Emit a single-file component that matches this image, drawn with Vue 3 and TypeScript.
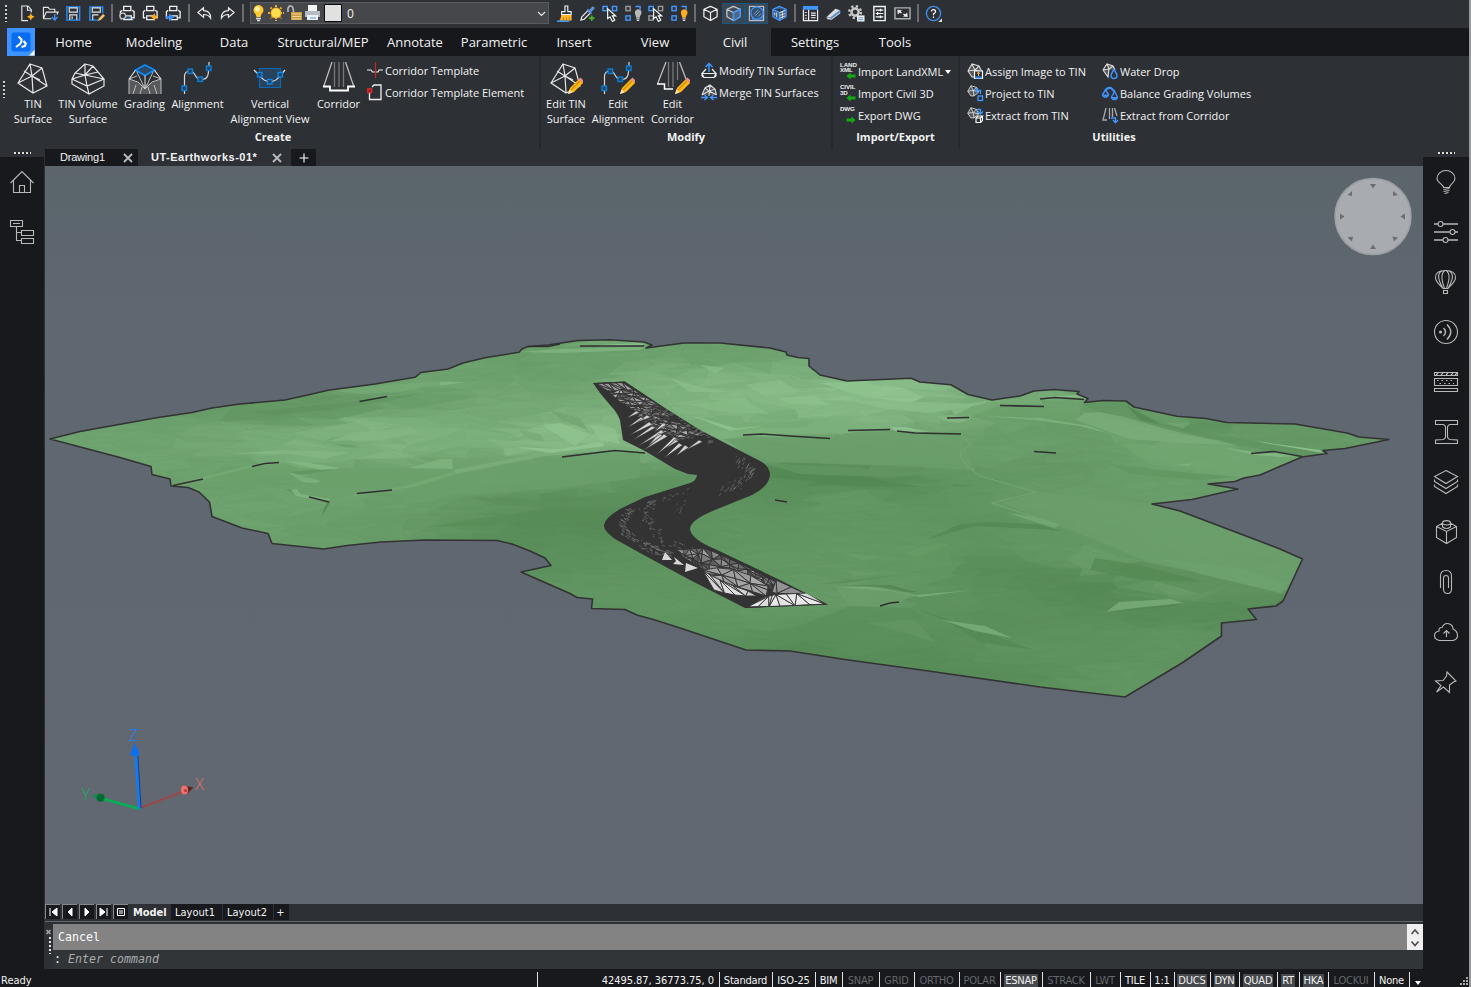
<script setup lang="ts">
type Pt = [number, number]
interface Facet { d: string; fill: string }

/* ---------- icons ---------- */
const W = 'fill="none" stroke="#e6e6e6" stroke-width="1.2"'
const B = 'fill="none" stroke="#3f96ff" stroke-width="1.4"'
const tin = '<path d="M14 2 26 6 31 24 17 31 2 21ZM2 21 16 14 14 2M26 6 16 14 31 24M16 14 17 31M16 14 8 9M16 14 24 18"/>'
const pencil = '<path d="M19 32 21 26 30 17 34 21 25 30Z" fill="#ffb819"/><path d="M22 28 31 19" stroke="#d98b00" stroke-width="1.3"/><path d="M29.500 17.500 31.500 15.500 35 19 33.500 21Z" fill="#ef8f86"/><path d="M19 32 20.500 27.500 23.500 30.500Z" fill="#f6e3bd"/>'
const nodes = (c: string) => `<g fill="#24435f" stroke="${c}" stroke-width="1.4"><rect x="1" y="24" width="4.500" height="4.500"/><rect x="7" y="7" width="4.500" height="4.500"/><rect x="17" y="15" width="4.500" height="4.500"/><rect x="25.500" y="4" width="4.500" height="4.500"/></g>`
const curve = '<path d="M3.500 32V14Q4 9 9 9C15 9 13 17 19.500 17.500 27 18 28 14 28-1" fill="none" stroke="#d8d8d8" stroke-width="1.2"/>'
const miniTin = '<path d="M1 8 5 1 12 3 15 9 9 14 5 14ZM5 1 8 7 12 3M1 8 8 7 9 14M8 7 15 9" fill="#55585c" stroke="#dcdcdc" stroke-width="1.1"/>'
const print = '<path d="M5 1.500H12.500V6H5ZM3.500 13.500H1.500V7L3.500 5.500M14 5.500 16 7V13.500H14M5 11.500H13V15.500H5Z" fill="none" stroke="#f1f1f1" stroke-width="1.4"/>'
const cube = (a: string, b: string) => `<path d="M9 1.500 16 4.500V12.500L9 16.500 2 12.500V4.500ZM2 4.500 9 8 16 4.500M9 8V16.500" fill="${a}" stroke="${b}" stroke-width="1.3" stroke-linejoin="round"/>`
const squares = (a: string, b: string) => `<g fill="none" stroke-width="1.500"><rect x="1" y="1.500" width="4.500" height="4.500" stroke="${a}"/><rect x="11" y="1.500" width="4.500" height="4.500" stroke="${b}"/><rect x="1" y="11.500" width="4.500" height="4.500" stroke="${b}"/></g>`
const pointer = '<path d="M6 4V14.500L8.500 12.500 11 17.500 13.500 16 11 11.500H14.500Z" fill="#2d3035" stroke="#fff" stroke-width="1.2"/>'
const bulb = (c: string) => `<path d="M10.500 8.500A3.500 3.500 0 1 1 16.500 10.500L15.500 13.500H12L11 10.500Z" fill="${c}"/><path d="M12 14.500H15.500M12.500 16.300H15" stroke="#ddd" stroke-width="1.2"/>`

const ic: Record<string, string> = {
  newf: `<path d="M13 8V5L9.500 1H3V16.500H9.500M9 1V5.500H13" ${W}/><path d="M12.500 8.500 13.700 11 16.500 12.500 13.700 14 12.500 16.500 11.300 14 8.500 12.500 11.300 11Z" fill="#ffb11e"/>`,
  open: `<path d="M1.500 14.500V2.500H6.500L8 4.500H13.500V7.500M1.500 14.500 4.500 7.500H17L15.800 10M1.500 14.500H10" ${W}/><path d="M13.500 9.500V15M10.500 12.500 13.500 16 16.500 12.500" ${B}/>`,
  save: `<path d="M2 2H15.500V16H2Z" fill="none" stroke="#2190ff" stroke-width="1.500"/><path d="M4.500 3H13V7.500H4.500ZM5 16V10.500H12.500V16M7.500 12V15" ${W}/>`,
  saveas: `<path d="M11 16H2V2H15.500V9" fill="none" stroke="#2190ff" stroke-width="1.500"/><path d="M4.500 3H13V7.500H4.500ZM5 16V10.500H11" ${W}/><path d="M10.500 17 11.500 14 16 9.500 18 11.500 13.500 16Z" fill="#f5c36b"/>`,
  preview: print + '<circle cx="4" cy="11.500" r="3" fill="#2d3035" stroke="#ccc" stroke-width="1.300"/><path d="M2 16 3 14" stroke="#ccc"/><path d="M12 14 15 16" stroke="#fff"/><path d="M7 14H13" stroke="#3f96ff"/>',
  publish: print + '<path d="M13 8.500 14.200 11 17 12.500 14.200 14 13 17 11.500 14 9 12.500 11.500 11Z" fill="#ffa913"/>',
  plot: print + '<path d="M1 13H7M4.500 10 8 13 4.500 16" fill="none" stroke="#2f8cff" stroke-width="2"/>',
  undo: '<path d="M2 8 8 3V6C13 6 15.500 8.500 15.500 14 13.500 10.500 11.500 10 8 10V13Z" fill="none" stroke="#ececec" stroke-width="1.200"/>',
  redo: '<path d="M16 8 10 3V6C5 6 2.500 8.500 2.500 14 4.500 10.500 6.500 10 10 10V13Z" fill="none" stroke="#ececec" stroke-width="1.200"/>',
  brush: '<path d="M9.500 1H12.500V7H16V10H6V7H9.500Z" fill="none" stroke="#f5f5f5" stroke-width="1.200"/><path d="M5.500 10.500H16.500V16.500H3.500Q5.500 14 5.500 10.500" fill="#ffb52b"/><path d="M8 13V16M11 13V16M14 13V16" stroke="#c47b00"/><path d="M1 17.200H14" stroke="#4aa0ff" stroke-width="1.500"/>',
  dropper: '<path d="M2 16 3 12.500 9.500 6 12 8.500 5.500 15Z" fill="none" stroke="#e6e6e6" stroke-width="1.300"/><path d="M8 5.500 9.500 4 11 5 14 1.500Q17 1.500 16.500 4L13 7.500 13.700 9 12.500 10Z" fill="#5b8fd9"/><path d="M13.500 11V17M10.500 14H16.500" stroke="#49b51e" stroke-width="1.800"/>',
  selA: squares('#4297ff', '#4297ff').replace(/<rect x="1" y="11.*?\/>/, '') + pointer,
  selB: squares('#999', '#4297ff').replace(/<rect x="11".*?\/>/, '') + bulb('#b8b8b8') + '<path d="M11 1.500H16V5" fill="none" stroke="#4297ff" stroke-width="1.500"/>',
  selC: squares('#4297ff', '#999') + pointer,
  selD: squares('#4297ff', '#4297ff').replace(/<rect x="11".*?\/>/, '') + bulb('#ffab24') + '<path d="M11 1.500H16V5" fill="none" stroke="#4297ff" stroke-width="1.500"/>',
  cube: cube('none', '#f0f0f0'),
  cubeB: cube('#4c545c', '#c5c9cd') + '<path d="M9 8 16 4.500V12.500L9 16.500Z" fill="#4d6684" stroke="#4297ff" stroke-width="1.500"/>',
  sphere: '<rect x="1.500" y="1.500" width="15" height="15" fill="none" stroke="#b6bcc2" stroke-width="1.300"/><rect x="4.500" y="4.500" width="10.500" height="10.500" fill="none" stroke="#3f96ff"/><circle cx="9.500" cy="8.500" r="6.500" fill="#33506f" stroke="#3f96ff" stroke-width="1.300"/><path d="M6 10 11 5M7 12 13 6M10 12.500 14 9" stroke="#7f9fc2"/>',
  wall: cube('#3c5f87', '#4297ff') + '<path d="M4 8V11M6 8V13M9 8 15 6M9 11 15 9M9 14 15 11.500M12 7V14" stroke="#e4dcc9"/>',
  panel: '<path d="M1 1H17V5H1Z" fill="#3f96ff"/><path d="M1.500 5V16.500H16.500V5M7 5V16.500M9.500 8.500H14.500M9.500 11H14.500M9.500 13.500H14.500" fill="none" stroke="#eee" stroke-width="1.300"/><path d="M3 8H5M3 11H5M3 14H5" stroke="#eee"/>',
  eraser: '<path d="M1.500 13 11 4 16 5.500 16 9 7 15.500 2.500 15Z" fill="#ddd"/><path d="M6 14 16 6.500" stroke="#3f96ff" stroke-width="2.200"/><path d="M2 13 7 14 16 6" fill="none" stroke="#8b8b8b"/>',
  gear: '<circle cx="7.500" cy="7.500" r="3.800" fill="none" stroke="#c8c8c8" stroke-width="2.600"/><circle cx="7.500" cy="7.500" r="6.200" fill="none" stroke="#c8c8c8" stroke-width="2.600" stroke-dasharray="2.400 2.470"/><path d="M9.500 11H17.500V17.500H9.500Z" fill="#eee"/><path d="M11 13.500H16M11 15.500H16" stroke="#5c96d8"/>',
  sheet: '<path d="M3 1.500H15V16.500H3Z" fill="none" stroke="#f4f4f4" stroke-width="1.500"/><path d="M5 5.500H13M5 9H13M5 12.500H13M10 4V7M7 7.500V10.500M10 11V14" stroke="#fff" stroke-width="1.300"/>',
  screen: '<path d="M1 3H17V14.500H1Z" fill="none" stroke="#aeb1b4" stroke-width="1.500"/><path d="M3.500 5 8.500 5.500 4 10ZM14.500 12.800 9.500 12.300 14 8Z" fill="#e7e7e7"/><path d="M5 6.500 8 8.500M13 11.500 10 9.500" stroke="#eee" stroke-width="1.500"/>',
  help: '<circle cx="9" cy="9" r="7.500" fill="none" stroke="#3f8ff0" stroke-width="1.400"/><path d="M6.800 7Q6.800 4.800 9 4.800 11.200 4.800 11.200 6.800 11.200 8 9 9.400V10.800M9 12.300V13.800" fill="none" stroke="#fff" stroke-width="1.300"/><path d="M18 14V18H14Z" fill="#ddd"/>',

  tin: `<g ${W}>${tin}</g>`,
  vol: `<g ${W}><path d="M14 2 22 4 33 17 16 24 1 17 4 11ZM1 17V22L18 32 33 24V17M16 24 18 32M1 17 14 13 14 2M14 13 16 24M14 13 27 10M14 13 33 17M4 11 14 13 22 4"/></g>`,
  grading: '<path d="M1 17V32H33V17L17 23Z" fill="#57595b"/><path d="M1 32V17L8 8 17 27 26 8 33 17V32M1 17 9 14M33 17 25 14M1 17 10 20M33 17 24 20M10 20 17 27 24 20M5 32 8 23M29 32 26 23M12 32 14 25M22 32 20 25" fill="none" stroke="#bcbcbc"/><path d="M17 3 26.500 8 17 13.500 7.500 8Z" fill="#2f4963" stroke="#0a8bff" stroke-width="1.700"/><path d="M7.500 8 1 17M26.500 8 33 17M17 13.500V27" stroke="#ddd"/>',
  align: curve + nodes('#0b7fd8'),
  valign: '<path d="M6.500 6.500H27.500V25.500H6.500Z" fill="#29435c" stroke="#0b68b4" stroke-width="1.200"/><path d="M1 8C5 12 6 13 8 15 12 21 22 21 26 15L32 8" fill="none" stroke="#ddd" stroke-width="1.300"/><g fill="#24435f" stroke="#0b87f0" stroke-width="1.300"><rect x="4.500" y="10.500" width="4.500" height="4.500"/><rect x="14.500" y="17.500" width="4.500" height="4.500"/><rect x="25" y="10.500" width="4.500" height="4.500"/></g>',
  corr: '<path d="M12.500 0V25M21.500 0V25M17 0V25" stroke="#777" stroke-width="1.300"/><path d="M10 0 1.500 25M23.500 0 32 25" stroke="#bbb" stroke-width="1.300"/><path d="M1 24.500H8V28.500H26V24.500H33" fill="none" stroke="#fff" stroke-width="1.800"/>',
  etin: `<g ${W}>${tin}</g>${pencil}`,
  ealign: curve + nodes('#0b7fd8') + pencil,
  ecorr: '<path d="M12.500 0V25M21.500 0V18M17 0V25" stroke="#777" stroke-width="1.300"/><path d="M10 0 1.500 22M23.500 0 30 17" stroke="#bbb" stroke-width="1.300"/><path d="M1 22H8.500V27H17" fill="none" stroke="#fff" stroke-width="1.500"/>' + pencil,

  ctpl: '<path d="M0 8H4L5.500 10H11L12 8H16" fill="none" stroke="#eee" stroke-width="1.200"/><path d="M8.500 0V16" stroke="#c92727" stroke-width="1.300"/>',
  ctel: '<path d="M5 3 7 1H14V15.500H2.500V9" fill="none" stroke="#eee" stroke-width="1.300"/><rect x=".8" y="4.800" width="3.800" height="3.800" fill="#8b2222" stroke="#e22c2c" stroke-width="1.300"/>',
  mtin: '<path d="M1 11.500 5 7M15 11.500 11 7M1 11.500H15L13 15.500H3ZM1 11.500V14L3 15.500M15 11.500V14L13 15.500" fill="none" stroke="#ececec" stroke-width="1.200"/><path d="M8 10V2M4.500 5 8 1.500 11.500 5" fill="none" stroke="#3f96ff" stroke-width="1.500"/>',
  merge: '<path d="M1 11 4 4 9 1 14 5 15.500 11M4 4 8 7 14 5M9 1 8 12M1 11 8 7 15.500 11" fill="#505357" stroke="#dcdcdc" stroke-width="1.100"/><path d="M0 13.500H6M3.500 11 6.500 13.500 3.500 16M16 13.500H10M12.500 11 9.500 13.500 12.500 16" fill="none" stroke="#3f96ff" stroke-width="1.400"/>',
  land: '<text x="0" y="4">LAND</text><text x="0" y="9">XML</text><path d="M6.500 13 10.500 9.500V11.500H15.500V14.500H10.500V16.500Z" fill="#12ac12"/>',
  civil: '<text x="0" y="4">CIVIL</text><text x="0" y="10">3D</text><path d="M6.500 13 10.500 9.500V11.500H15.500V14.500H10.500V16.500Z" fill="#12ac12"/>',
  dwg: '<text x="0" y="4">DWG</text><path d="M15.500 13 11.500 9.500V11.500H6.500V14.500H11.500V16.500Z" fill="#12ac12"/>',
  assign: miniTin + '<path d="M7.500 8H15.500V15.500H7.500Z" fill="#2d3035" stroke="#fff" stroke-width="1.200"/><path d="M8 13.500H15V15.500H8Z" fill="#2f86f0"/><path d="M11.500 9.500V13M10 10.500 11.500 9.300 13 10.500" stroke="#f1b04a"/>',
  project: '<g transform="scale(.78)">' + miniTin + '</g><path d="M9 5.500H13.500V9M11 3 8.500 5.500 11 8" fill="none" stroke="#3f96ff" stroke-width="1.300"/><rect x="11" y="11" width="4.500" height="4.500" fill="#2d3035" stroke="#3f96ff" stroke-width="1.300"/>',
  extract: '<g transform="scale(.78)">' + miniTin + '</g><path d="M10 2.500H13.500V6M11 4.500 13.500 7 16 4.500" fill="none" stroke="#3f96ff" stroke-width="1.300"/><path d="M9 11H13.500V15.500H9ZM9 11 11 9H15.500L13.500 11M15.500 9V13.500L13.500 15.500" fill="#2d3035" stroke="#fff" stroke-width="1.100"/>',
  drop: '<path d="M1 7 5 1 11 3 13 7M1 7 7 6 5 1M7 6 11 3M1 7 6 14 7 6" fill="#55585c" stroke="#dcdcdc" stroke-width="1.200"/><path d="M12 6.500Q15 11 15 12.800 15 15.500 12 15.500 9 15.500 9 12.800 9 11 12 6.500Z" fill="#2d3035" stroke="#3f96ff" stroke-width="1.400"/>',
  balance: '<path d="M3 6Q5 2 9 3L13 7" fill="none" stroke="#3f8ff5" stroke-width="2.200"/><path d="M3.500 5 6.500 9.500Q6 12 3.500 12 1 12 .5 9.500ZM12.500 6.500 15.500 12Q15 14.500 12.500 14.500 10 14.500 9.500 12Z" fill="none" stroke="#3f8ff5" stroke-width="1.500"/><path d="M.8 9.500H6.200V11.500H.8ZM9.800 12H15.200V14H9.800Z" fill="#3f8ff5"/>',
  ecor: '<path d="M4 1 1 13H5M7.500 1V12M10.500 1V10M12.500 1 15 9" fill="none" stroke="#a7a9ab" stroke-width="1.300"/><path d="M9 11H13.500V15M11 13 13.500 15.800 16 13" fill="none" stroke="#3f96ff" stroke-width="1.300"/>',

  home: '<path d="M.5 13 12 1.500 23.500 13M3.500 10.500V22.500H20.500V10.500M9.500 22.500V15.500H14.500V22.500"/>',
  tree: '<path d="M.5.500H12.500V6.500H.5ZM3 3.500H10M6.500 6.500V20.500H11.500M6.500 12.500H11.500M11.500 10.500H23.500V15.500H11.500ZM11.500 18.500H23.500V23.500H11.500Z"/>',
  tip: '<path d="M9.500 17.500C9.500 14 3 13 3 8.500A9 8 0 0 1 21 8.500C21 13 15.500 14 15.500 17.500ZM9.500 19.500 15.500 18.500M9.500 21.500 15.500 20.500M10.500 23.500 14.500 22.500"/>',
  sliders: '<path d="M0 4H4M9 4H24M0 12H16M21 12H24M0 20H9M14 20H24" stroke-width="1.500"/><circle cx="6.500" cy="4" r="2.500"/><circle cx="18.500" cy="12" r="2.500"/><circle cx="11.500" cy="20" r="2.500"/>',
  balloon: '<path d="M9 18.500C6 15 1.500 12 1.500 7.500Q1.500.500 11.500.500 21.500.500 21.500 7.500C21.500 12 17 15 14 18.500ZM9 18.500C5 11 2 4 8 .800M14 18.500C18 11 21 4 15 .800M10.500 18.500C8 11 6 4 11 .5M12.500 18.500C15 11 17 4 12 .5M9.500 20.500H13.500V23.500H9.500Z"/>',
  cast: '<circle cx="12" cy="12" r="11.500"/><circle cx="6.500" cy="12" r="1" fill="#c8c8c8"/><path d="M9.500 8Q13.500 12 9.500 16M13 4.500Q20.500 12 13 19.500" stroke-width="1.400"/>',
  hatch: '<path d="M.5 2.500H23.500V5.500H.5ZM.5 8.500H23.500V15.500H.5ZM.5 18.500H23.500V21.500H.5ZM2 5 4 3M7 5 9 3M12 5 14 3M17 5 19 3M21 5 23 3"/><path d="M3 10.500H21M5.500 13.500H20" stroke-dasharray="1.500 3"/>',
  beam: '<path d="M1.500.500H23.500V4.500L16 4.500Q13.500 5 13.500 7.500V16.500Q13.500 19 16 19.500L23.500 20V23.500H1.500V20L9 19.500Q11.500 19 11.500 16.500V7.500Q11.500 5 9 4.500L1.500 4.500Z"/>',
  layers: '<path d="M12 .5 23.500 6.500 12 13.500.5 6.500ZM.5 9.500 .5 11.500 12 18.500 23.500 11.500V9.500M.5 14.500V16.500L12 23.500 23.500 16.500V14.500"/>',
  block: '<path d="M9 3 2.500 6.500V17.500L12.500 23.500 22.500 17.500V6.500L16 3M2.500 6.500 12.500 11.500 22.500 6.500M12.500 11.500V23.500M8.500 2.500V7Q12.500 10 16.500 7V2.500"/><ellipse cx="12.500" cy="2.800" rx="4" ry="2.200"/>',
  clip: '<path d="M6.500 18V6Q6.500.500 12 .5 17.500.500 17.500 6V19Q17.500 23.500 13.500 23.500 9.500 23.500 9.500 19V8Q9.500 5.500 12 5.500 14.500 5.500 14.500 8V18"/>',
  cloud: '<path d="M5.500 20.500Q.500 19.500.500 15.500.500 12 5 11 4.500 7.500 8 7.500 10 3 14 3.500 19 4.500 19 9 23.500 11 23.500 15.500 23.500 19.500 19 20.500ZM12.500 17V10.500M9.500 13.500 12.500 10.500 15.500 13.500"/>',
  pin: '<path d="M13 2 22 11 19.500 12 15.500 15V22.500L9.500 17 2.500 22 7 15.500 1.500 11 9 10.500 12.500 6Z"/>',
}

const bar1 = [['newf', 'open', 'save', 'saveas'], ['preview', 'publish', 'plot'], ['undo', 'redo']]
const bar2 = [['brush', 'dropper', 'selA', 'selB', 'selC', 'selD'], ['cube', 'cubeB', 'sphere', 'wall'], ['panel', 'eraser', 'gear', 'sheet', 'screen'], ['help']]

const tabs = [
  ['Home', 'w77'], ['Modeling', 'w84'], ['Data', 'w76'], ['Structural/MEP', 'w102'], ['Annotate', 'w82'], ['Parametric', 'w76'],
  ['Insert', 'w84'], ['View', 'w80'], ['Civil', 'w75 on'], ['Settings', 'w88'], ['Tools', 'w72'],
]
const groups = [
  { title: 'Create', cls: 'create', big: [['tin', 'TIN', 'Surface', 'c52'], ['vol', 'TIN Volume', 'Surface', 'c58'], ['grading', 'Grading', '', 'c55'], ['align', 'Alignment', '', 'c51'], ['valign', 'Vertical', 'Alignment View', 'c94'], ['corr', 'Corridor', '', 'c43']],
    cols: [{ cls: 'two', rows: [['ctpl', 'Corridor Template'], ['ctel', 'Corridor Template Element']] }] },
  { title: 'Modify', cls: 'modify', big: [['etin', 'Edit TIN', 'Surface', 'c50'], ['ealign', 'Edit', 'Alignment', 'c54'], ['ecorr', 'Edit', 'Corridor', 'c55']],
    cols: [{ cls: 'two near', rows: [['mtin', 'Modify TIN Surface'], ['merge', 'Merge TIN Surfaces']] }] },
  { title: 'Import/Export', cls: 'impexp', big: [], cols: [{ cls: '', rows: [['land', 'Import LandXML'], ['civil', 'Import Civil 3D'], ['dwg', 'Export DWG']] }] },
  { title: 'Utilities', cls: 'util', big: [], cols: [
    { cls: 'ua', rows: [['assign', 'Assign Image to TIN'], ['project', 'Project to TIN'], ['extract', 'Extract from TIN']] },
    { cls: '', rows: [['drop', 'Water Drop'], ['balance', 'Balance Grading Volumes'], ['ecor', 'Extract from Corridor']] }] },
]
const rail = ['tip', 'sliders', 'balloon', 'cast', 'hatch', 'beam', 'layers', 'block', 'clip', 'cloud', 'pin']
const status: [string, number, string][] = [
  ['Standard', 53, ''], ['ISO-25', 43, ''], ['BIM', 27, ''], ['SNAP', 37, 'dim'], ['GRID', 35, 'dim'], ['ORTHO', 45, 'dim'], ['POLAR', 41, 'dim'],
  ['ESNAP', 42, 'hot'], ['STRACK', 48, 'dim'], ['LWT', 30, 'dim'], ['TILE', 30, ''], ['1:1', 24, ''], ['DUCS', 36, 'hot'], ['DYN', 29, 'hot'],
  ['QUAD', 38, 'hot'], ['RT', 22, 'hot'], ['HKA', 29, 'hot'], ['LOCKUI', 46, 'dim'], ['None', 35, ''],
]

/* ---------- terrain ---------- */
let seed = 7
const rnd = () => { seed = (seed * 16807) % 2147483647; return seed / 2147483647 }

const outline = 'M50 439 80 431.500 155 418 192 412.500 212 408 240 404 285 400 310 394.500 328 390.300 375 384 415 377.300 421 372.500 448 369 463 363 485 357.700 519 352.300 522 349 528 346.500 548 345 578 340.500 610 339.700 644 342 652 345 646 348 684 343 720 343 770 348 786 352 787 355 798 357.500 809 358.500 809 366 820 375 847 381 911 378.300 920 382 951 384.700 968 394.500 992 400 1020 396 1034 391 1054 389.500 1079 391.500 1077 394 1088 398.500 1084.500 402.500 1103 400.500 1126 401 1134 407 1177 416.300 1206 418.500 1227 422.500 1295 424 1347 433 1359 437 1389 439.500 1345 448.500 1323 450.500 1327 453.500 1302 457 1260 475 1244 478 1235 481.500 1208 484 1238 489 1192 499.500 1152 504 1180 511 1280 549 1302.500 559 1283 601 1276 606 1248 609 1256.500 619.500 1221.500 623 1221.500 636 1182 663 1125 697 1040 687 925 670.500 845 659.500 790 651 746 650 680 628 655 620 637 615 625 609.500 591.500 608.500 592.500 599 577 597.500 570 593.500 521 572 551 565.500 545 558 530 551 512 544 497 540.500 425 540 381 542 347 545.500 324 549 272 543.500 268 533.500 242 528 212 516.500 209.500 502 199 492 188 487.500 171 486 170 479 152 474.500 151 466.500 120 457.500Z'

const lights = [
  60,439,.4,150,410,.35,150,430,.38,200,410,.32,250,400,.36,300,412,.28,260,412,.22,330,404,.22,350,395,.35,420,383,.4,430,400,.33,480,370,.38,520,358,.33,600,360,.34,620,355,.36,700,355,.36,750,355,.38,800,370,.5,560,372,.36,
  180,440,.43,240,435,.5,300,440,.58,360,430,.62,420,430,.6,460,420,.54,500,400,.46,560,385,.42,590,420,.62,570,430,.72,540,442,.68,600,440,.7,480,440,.55,520,410,.48,650,375,.56,700,385,.62,750,380,.62,800,385,.68,850,390,.78,900,395,.8,820,405,.7,760,410,.6,720,400,.66,870,415,.66,940,405,.6,700,430,.58,780,425,.54,390,450,.6,300,452,.56,160,450,.4,
  200,475,.38,250,480,.36,300,500,.38,260,520,.38,320,535,.34,400,510,.34,450,480,.36,400,473,.38,350,475,.38,550,470,.33,600,475,.28,500,510,.22,560,505,.12,450,525,.22,520,520,.1,600,520,.08,500,540,.12,560,560,.16,600,590,.22,640,600,.23,580,600,.22,700,630,.2,760,620,.24,480,465,.4,640,490,.18,220,500,.38,380,530,.32,
  780,450,.34,850,450,.34,900,455,.33,800,470,.1,850,478,.05,900,482,.12,780,490,.15,850,500,.25,950,480,.22,980,450,.33,1050,430,.32,1100,440,.3,1050,470,.26,1100,500,.32,1150,520,.36,1200,540,.36,1250,570,.35,1100,560,.32,1180,585,.3,1230,585,.34,1050,545,.24,980,530,.2,900,540,.24,850,550,.24,800,530,.22,1150,430,.45,1020,415,.36,1100,410,.32,1180,440,.46,1220,460,.46,1200,425,.15,1130,405,.25,1250,425,.28,1300,430,.28,1380,438,.3,1300,443,.25,1200,417,.28,1180,480,.34,1000,440,.34,1050,400,.5,960,410,.45,
  1000,570,.12,1050,580,.09,1100,592,.06,1150,612,.1,1220,608,.1,1260,605,.08,1000,620,.14,950,600,.18,900,570,.24,870,590,.28,860,640,.15,900,660,.1,960,670,.12,800,645,.08,1020,650,.18,1120,680,.22,1170,640,.21,1100,640,.18,1000,680,.12,830,600,.28,760,640,.14,
]
const lightAt = (x: number, y: number) => {
  let s = 0, w = 0
  for (let i = 0; i < lights.length; i += 3) {
    const dx = (x - lights[i]) / 3, dy = y - lights[i + 1]
    const k = 1 / ((dx * dx + dy * dy + 40) ** 1.9)
    s += k * lights[i + 2]; w += k
  }
  return s / w
}
const green = (l: number) => `rgb(${Math.round(80 + 75 * l)},${Math.round(133 + 74 * l)},${Math.round(81 + 74 * l)})`

const facets: Facet[] = (() => {
  const cw = 34, ch = 7, nx = 42, ny = 53
  const p: Pt[][] = []
  for (let j = 0; j <= ny; j++) {
    p.push([])
    for (let i = 0; i <= nx; i++) p[j].push([20 + i * cw + (rnd() - .5) * 32 + (j % 2) * 14, 332 + j * ch + (rnd() - .5) * 6 + Math.sin(i / 4) * 3])
  }
  const bins: string[] = []
  const add = (a: Pt, b: Pt, c: Pt) => {
    const x = (a[0] + b[0] + c[0]) / 3, y = (a[1] + b[1] + c[1]) / 3
    const base = lightAt(x, y)
    const l = base + (rnd() - .5) * (.015 + base * base * .24)
    const q = Math.max(0, Math.min(80, Math.round(l * 80)))
    bins[q] = (bins[q] || '') + `M${[a, b, c].map(v => v[0].toFixed(1) + ' ' + v[1].toFixed(1)).join(' ')}Z`
  }
  for (let j = 0; j < ny; j++) for (let i = 0; i < nx; i++) {
    const a = p[j][i], b = p[j][i + 1], c = p[j + 1][i], d = p[j + 1][i + 1]
    if (rnd() > .5) { add(a, b, c); add(b, d, c) } else { add(a, b, d); add(a, d, c) }
  }
  return bins.map((d, q) => ({ d, fill: green(q / 80) })).filter(f => f.d)
})()

const patches: [string, number][] = [
  ['M330 390 400 384 445 381 465 382 430 386 400 392 360 394Z', .5],
  ['M440 382 465 382 440 386Z', .66], ['M250 412 300 407 340 404 330 410 270 415Z', .18], ['M340 403 385 397 420 394 385 402 335 408Z', .22],
  ['M519 352 560 349 646 347 640 350 560 353Z', .66], ['M560 346 650 344 640 342 590 341Z', .48], ['M598 345 640 343 645 345 600 347Z', .85],
  ['M456 474 500 465 545 456 600 451 640 452 640 478 560 488 470 495 405 490Z', .35],
  ['M470 497 560 502 650 494 625 508 560 508 500 505Z', .14], ['M430 527 480 518 590 510 605 522 520 522 470 526Z', .1],
  ['M743 436 830 439 850 432 895 431 961 435 966 452 975 470 900 466 770 462 740 448Z', .34],
  ['M766 463 860 468 940 474 890 477 800 474Z', .22],
  ['M172 485 210 475 255 464 285 461 325 465 340 470 320 468 275 465 205 479Z', .52],
  ['M205 479 255 466 285 463 300 468 288 472 240 480Z', .36],
  ['M285 461 310 463 340 468 325 471 300 465Z', .7],
  ['M288 472 310 475 322 482 314 483 302 482Z', .6], ['M288 472 300 475 340 469 310 470Z', .2],
  ['M293 490 325 480 360 475 450 474 440 481 405 487 360 492 330 502 309 497 297 496Z', .37],
  ['M340 469 395 468 408 470 452 470 450 475 380 483 325 482 300 476Z', .36],
  ['M285 489 299 496 296 492 293 490Z', .14], ['M291 490 297 489 300 494 330 499 327 502 296 496Z', .66],
  ['M331 501 322 516 324 508 328 502Z', .02], ['M330 501 360 494 405 486 452 472 456 474 415 487 370 493Z', .5],
  ['M410 468 440 459 452 459 453 469Z', .64], ['M453 470 500 461 545 452 600 448 622 449 600 451 545 456 500 465 456 474Z', .56],
  ['M330 438 345 436 361 447 322 443Z', .46], ['M335 444 350 445 361 448 345 447Z', .28],
  ['M330 441 355 432 410 428 420 433 380 440Z', .68], ['M230 454 280 450 350 452 325 459 290 454Z', .68],
  ['M542 425 560 423 590 434 575 446Z', .84], ['M515 447 560 449 600 442 605 446 550 453Z', .86], ['M550 410 580 418 588 430 562 420Z', .42],
  ['M590 425 615 428 620 444 600 440Z', .82], ['M520 430 540 434 545 442 525 438Z', .5],
  ['M623 398 640 395 655 415 640 405Z', .62], ['M670 378 700 387 730 392 690 392Z', .76], ['M700 365 725 368 715 373Z', .72], ['M690 405 740 398 770 414 720 412Z', .72],
  ['M745 385 780 380 800 392 765 396Z', .76], ['M775 398 815 396 830 405 790 404Z', .8], ['M655 372 690 370 675 378Z', .46],
  ['M690 415 735 428 765 426 730 431Z', .84], ['M700 434 760 428 848 427 890 427 850 433 760 434 710 437Z', .6],
  ['M820 383 860 381 905 392 868 398Z', .84], ['M850 400 920 402 985 404 930 413 880 408Z', .76], ['M890 427 905 427 930 432 895 431Z', .88],
  ['M950 406 985 401 1005 400 975 405 955 416Z', .72], ['M990 401 1030 396 1078 394 1084 399 1045 398 1040 404 1000 404 970 416 948 417Z', .5],
  ['M1040 397 1080 395 1086 399 1078 397Z', .78], ['M936 416 950 415 970 418 960 423 944 421Z', .68],
  ['M970 418 1000 406 1045 407 1040 400 1084 401 1085 403 1080 412 1076 420 1035 417Z', .36],
  ['M985 416 1040 418 1090 426 1110 434 1080 426 1035 420Z', .64],
  ['M1082 404 1126 402 1135 412 1180 428 1250 443 1185 436 1130 424 1100 414Z', .22],
  ['M1084 413 1100 412 1125 417 1165 429 1235 445 1180 443 1130 439 1095 427 1076 420Z', .54],
  ['M1100 411 1135 421 1175 432 1235 444 1180 434 1140 422Z', .42],
  ['M1126 405 1160 424 1210 434 1185 431 1140 420Z', .03], ['M1150 422 1260 442 1320 453 1308 456 1240 446Z', .2],
  ['M1260 442 1320 450 1323 453Z', .9], ['M1255 441 1265 442 1290 448Z', .74],
  ['M1095 427 1130 440 1155 449 1175 462 1140 452Z', .38], ['M1120 444 1230 446 1250 453 1302 457 1260 475 1244 478 1200 471 1150 464Z', .43],
  ['M1225 448 1255 452 1275 451 1302 456 1280 457 1255 455Z', .72], ['M1175 465 1195 463 1188 466Z', .62],
  ['M1110 464 1180 472 1235 477 1200 480 1130 474Z', .23],
  ['M1000 504 1036 492 1152 504 1180 511 1280 549 1302.500 559 1287 590 1276 596 1200 577 1140 562 1110 548 1060 528Z', .34],
  ['M1140 561 1220 577 1282 594 1278 603 1248 608 1170 585 1110 570Z', .14],
  ['M1160 559 1240 568 1288 583 1281 593 1200 574Z', .39],
  ['M1000 502 1060 526 1110 546 1150 563 1115 555 1060 535 1030 530Z', .24],
  ['M1095 558 1140 565 1205 582 1140 580 1090 570Z', .06],
  ['M1008 513 1030 516 1060 524 1055 528 1035 522Z', .5],
  ['M925 540 960 524 985 522 1038 524 1062 531 1020 528 975 526Z', .04],
  ['M905 552 935 543 950 545 915 558Z', .3], ['M840 553 880 556 865 561Z', .33], ['M845 570 880 574 855 576Z', .34],
  ['M760 464 800 474 870 478 920 487 850 486 770 477Z', .03], ['M950 484 975 486 955 487Z', .08],
  ['M1106 612 1119 602 1170 599 1184 603 1135 608Z', .54], ['M1106 612 1185 603 1170 607Z', .02], ['M1183 600 1235 581 1220 591 1195 601Z', .22],
  ['M835 586 885 587 916 595 900 602 880 607 850 606 842 597Z', .34], ['M838 587 870 587 915 595 972 590 920 597 890 591Z', .56],
  ['M846 585 890 585 917 592 905 592 880 587Z', 0], ['M820 584 845 583 900 575 850 580Z', .1],
  ['M746 648 850 606 910 608 925 618 870 627 820 640Z', .13], ['M866 623 915 619 935 642 880 626Z', .22],
  ['M912 608 945 620 980 642 1034 650 990 634 950 620Z', .04], ['M942 620 985 626 1012 638 975 631Z', .56],
]

const black = 'M173 485.500 203 479M252 466.500 265 463.500 279 462.500M359.500 401.500 387 396.500M309 497 329 502M357 493.500 392 490M562 457 578 455 615 450.500 645 453M743 435 762 434 790 436 830 438.500M848 430.500 890 429.500M897 431 915 433 961 434M947 418 969 417.500M1000 405.500 1044 406.500M1040 399 1055 397.500 1084 399.500M1034 451.500 1056 453M775 500 787 502M1251 453.500 1274 451.500 1302 456.500M880 606 890 603 899 602M528 346.500 548 346.500 560 344M580 346 644 346'

/* ---------- corridor mesh ---------- */
const corridor = 'M593 383 625 381.500 665 408 700 430 760 461Q770 466 770 476 768 487 752 495L715 510Q690 520 690 529 691 539 715 549L780 580 828 604.500 745 608 690 580 640 553 615 539Q604 531 604 526 604 518 622 508L645 497 690 483Q697 480 697 475L688 474 675 469 645 451 623 440 620 420Q617 412 610 405L600 393Z'

const at = (line: Pt[], t: number): Pt => {
  const s = Math.min(t * (line.length - 1), line.length - 1.0001), i = Math.floor(s), f = s - i
  return [line[i][0] + (line[i + 1][0] - line[i][0]) * f, line[i][1] + (line[i + 1][1] - line[i][1]) * f]
}
const mesh = (a: Pt[], b: Pt[], n: number, rows: number, lo: number, hi: number, jit: number): Facet[] => {
  const out: Facet[] = [], g: Pt[][] = []
  for (let r = 0; r <= rows; r++) {
    g.push([])
    for (let i = 0; i <= n; i++) {
      const inner = r > 0 && r < rows ? jit : 0
      const p = at(a, i / n), q = at(b, i / n), k = r / rows
      g[r].push([p[0] + (q[0] - p[0]) * k + (rnd() - .5) * inner, p[1] + (q[1] - p[1]) * k + (rnd() - .5) * inner])
    }
  }
  const tri = (p: Pt, q: Pt, s: Pt) => {
    const v = Math.round(lo + rnd() * (hi - lo))
    out.push({ d: `M${[p, q, s].map(m => m[0].toFixed(1) + ' ' + m[1].toFixed(1)).join(' ')}Z`, fill: `rgb(${v},${v},${v})` })
  }
  for (let r = 0; r < rows; r++) for (let i = 0; i < n; i++) {
    const p = g[r][i], q = g[r][i + 1], s = g[r + 1][i], t = g[r + 1][i + 1]
    if ((i + r) % 2) { tri(p, q, s); tri(q, t, s) } else { tri(p, q, t); tri(p, t, s) }
  }
  return out
}
const tris: Facet[] = [
  ...mesh([[596, 384], [622, 382.500]], [[608, 391], [634, 390]], 4, 1, 145, 180, 0),
  ...mesh([[608, 391], [620, 402], [632, 409]], [[634, 390], [652, 401], [674, 416]], 6, 4, 95, 180, 4),
  ...mesh([[632, 409], [645, 423], [676, 440]], [[660, 410], [678, 422], [704, 436]], 10, 5, 50, 175, 4),
  /* lower arm: steep upper half, mid slope, pale shoulder and end face */
  ...mesh([[676, 550], [705, 548], [745, 566], [776, 582]], [[690, 561], [704, 570], [745, 576], [772, 590]], 13, 3, 80, 160, 4),
  ...mesh([[776, 580], [806, 594]], [[772, 592], [782, 595]], 2, 1, 130, 150, 0),
  ...mesh([[703, 570], [722, 567], [745, 572], [768, 586]], [[712, 576], [728, 584], [748, 590], [766, 596]], 4, 2, 150, 170, 3),
  ...mesh([[703, 571], [712, 576], [728, 584], [748, 591]], [[714, 590], [728, 594], [742, 596], [757, 596]], 4, 1, 200, 225, 0),
  ...mesh([[747, 607], [780, 606.500], [825, 604]], [[765, 597], [776, 594.500], [807, 593]], 6, 1, 216, 235, 0),
]
const spikes = ([
  [627, 418, 637, 412], [628, 427, 642, 418], [630, 435, 650, 423], [633, 440, 653, 427], [638, 446, 662, 431], [644, 450, 665, 435],
  [656, 455, 675, 438], [664, 458, 680, 444], [676, 456, 686, 446], [686, 450, 700, 441], [636, 423, 648, 416], [648, 446, 660, 434],
  [654, 432, 664, 424], [666, 448, 676, 440],
] as number[][]).map(([x, y, u, v], i) => `M${x} ${y}L${u - 1} ${v - 1} ${u + 2.500} ${v + (i % 3) * .4 + .8}Z`).join('')

const specks = (() => {
  let d = ''
  const zone = (line: Pt[], w: number, n: number, dx: number, dy: number) => {
    for (let i = 0; i < n; i++) {
      const p = at(line, rnd()), k = .4 + rnd()
      const x = p[0] + (rnd() - .5) * w, y = p[1] + (rnd() - .5) * w
      d += `M${x.toFixed(1)} ${y.toFixed(1)}l${(dx * k).toFixed(1)} ${(dy * k).toFixed(1)}`
    }
  }
  zone([[665, 405], [690, 425], [712, 440]], 10, 60, 4, -1)
  zone([[640, 410], [665, 424], [690, 440]], 14, 50, 4, -2)
  zone([[735, 458], [750, 472], [742, 484], [720, 493]], 10, 65, 1.500, -2.500)
  zone([[690, 490], [655, 502], [628, 512]], 5, 26, 2.500, -1)
  zone([[628, 512], [620, 524], [630, 538], [655, 550]], 8, 80, 2.500, 1.500)
  zone([[648, 505], [646, 520], [660, 540], [690, 552]], 10, 55, 2, 1)
  zone([[675, 510], [690, 503]], 8, 10, 1.500, -1)
  zone([[640, 545], [670, 555]], 7, 25, 4, 1)
  return d
})()
</script>

<template>
  <div class="app">
    <header class="quick">
      <i class="grip" />
      <template v-for="(g, n) in bar1" :key="'a' + n">
        <span v-for="k in g" :key="k" class="qb"><svg viewBox="0 0 18 18" v-html="ic[k]" /></span>
        <i class="sep" />
      </template>
      <div class="layer">
        <svg width="96" height="22" viewBox="0 0 96 22">
          <path d="M4.500 12A5 5 0 1 1 10.500 12L9.500 15H5.500Z" fill="#ffc82c" /><circle cx="6.500" cy="7" r="2.500" fill="#fff2b5" /><path d="M5 16.500H10M6 18.500H9" stroke="#ddd" stroke-width="1.500" />
          <path d="M25 3V19M17 11H33M19.500 5.500 30.500 16.500M30.500 5.500 19.500 16.500" stroke="#f5a623" stroke-width="2" stroke-dasharray="2 1" /><circle cx="25" cy="11" r="5" fill="#ffe04c" stroke="#f5b32a" />
          <path d="M37 10V6Q38 3.500 40 4 42.500 4.500 42.500 10" fill="none" stroke="#bcbcbc" stroke-width="1.600" /><path d="M40 10H51V18H40Z" fill="#c79a43" /><path d="M41 12H50M41 14.500H50M41 17H50" stroke="#f2d58c" />
          <path d="M57 3H66V9H57Z" fill="#f5f5f5" /><path d="M54 9H69V15H54Z" fill="#b5bcc4" /><path d="M56 13H67V18H56Z" fill="#eef2f5" /><path d="M59 16H65" stroke="#5b9be8" />
          <path d="M73.500 2.500H90.500V19.500H73.500Z" fill="#e1e1e1" stroke="#0c0c0c" />
        </svg>
        <span>0</span>
        <svg class="chev" width="9" height="6" viewBox="0 0 9 6"><path d="M1 1 4.500 4.500 8 1" fill="none" stroke="#e8e8e8" stroke-width="1.200" /></svg>
      </div>
      <template v-for="(g, n) in bar2" :key="'b' + n">
        <span v-for="k in g" :key="k" class="qb" :class="{ lit: k === 'cubeB' || k === 'sphere' }"><svg viewBox="0 0 18 18" v-html="ic[k]" /></span>
        <i v-if="n < 3" class="sep" />
      </template>
    </header>

    <nav class="tabs">
      <div class="logo">
        <svg width="28" height="28" viewBox="0 0 28 28">
          <rect width="28" height="28" fill="#3f93ff" /><rect x="4.500" y="4.500" width="19" height="19" rx="2" fill="#0a6cf0" />
          <path d="M11.500 8.500 14.500 11.500Q15 14 13 16L9 19M16.500 13 18.800 15.500 18 18 14.500 19" fill="none" stroke="#fff" stroke-width="2.100" /><path d="M27.500 22V27.500H22Z" fill="#fff" />
        </svg>
      </div>
      <div v-for="t in tabs" :key="t[0]" class="tab" :class="t[1]">{{ t[0] }}</div>
    </nav>

    <section class="ribbon">
      <div class="handle"><i /></div>
      <div v-for="g in groups" :key="g.title" class="group" :class="g.cls">
        <div class="tools">
          <div v-for="b in g.big" :key="b[0]" class="big" :class="b[3]">
            <svg width="34" height="34" viewBox="0 0 34 34" v-html="ic[b[0]]" />
            <span>{{ b[1] }}</span><span>{{ b[2] }}</span>
          </div>
          <div v-for="(c, n) in g.cols" :key="n" class="col" :class="c.cls">
            <div v-for="r in c.rows" :key="r[0]" class="row">
              <svg width="16" height="17" viewBox="0 0 16 17" v-html="ic[r[0]]" /><span>{{ r[1] }}</span><i v-if="r[0] === 'land'" class="drop" />
            </div>
          </div>
        </div>
        <div class="title">{{ g.title }}</div>
      </div>
    </section>

    <main class="body">
      <aside class="side left">
        <div class="dots"><i /></div>
        <div v-for="k in ['home', 'tree']" :key="k" class="sb"><svg viewBox="0 0 24 24" v-html="ic[k]" /></div>
      </aside>

      <div class="center">
        <div class="docs">
          <div class="doc a"><span>Drawing1</span><svg viewBox="0 0 10 10"><path d="M1 1 9 9M9 1 1 9" /></svg></div>
          <div class="doc b"><span>UT-Earthworks-01*</span><svg viewBox="0 0 10 10"><path d="M1 1 9 9M9 1 1 9" /></svg></div>
          <div class="doc c"><svg viewBox="0 0 10 10"><path d="M5 .5V9.500M.5 5H9.500" /></svg></div>
        </div>
        <svg class="view" width="1378" height="738" viewBox="45 166 1378 738">
          <defs>
            <linearGradient id="sky" x1="0" y1="0" x2="0" y2="1"><stop offset="0" stop-color="#5b656b" /><stop offset=".2" stop-color="#5f6770" /><stop offset="1" stop-color="#616872" /></linearGradient>
            <clipPath id="land"><path :d="outline" /></clipPath>
            <clipPath id="road"><path :d="corridor" /></clipPath>
          </defs>
          <rect x="45" y="166" width="1378" height="738" fill="url(#sky)" />
          <g clip-path="url(#land)">
            <path v-for="(f, i) in facets" :key="i" :d="f.d" :fill="f.fill" :stroke="f.fill" stroke-width=".7" />
            <path v-for="(f, i) in patches" :key="'p' + i" :d="f[0]" :fill="green(f[1])" opacity=".8" />
            <path d="M961 434 971 445 960 452Q960 462 980 476L1036 492 992 503 1060 525" fill="none" :stroke="green(.42)" stroke-width="1.200" />
          </g>
          <path :d="outline" fill="none" stroke="#333" stroke-width="1.600" stroke-linejoin="round" />
          <path :d="black" fill="none" stroke="#303030" stroke-width="1.600" />
          <path :d="corridor" fill="#333" />
          <g clip-path="url(#road)">
            <path v-for="(f, i) in tris" :key="'t' + i" :d="f.d" :fill="f.fill" stroke="#333" stroke-width=".9" />
            <path :d="spikes" fill="#d2d2d2" stroke="#333" stroke-width=".5" />
            <path :d="specks" fill="none" stroke="#848484" stroke-width=".55" />
            <path d="M665 552 672 560 662 560ZM674 557 684 565 673 564 676 561ZM686 563 698 568 685 572Z" fill="#d8d8d8" />
            <path d="M593 383 625 381.500M745 607.500 828 604.500" stroke="#333" stroke-width="1.500" />
          </g>

          <circle cx="1373" cy="216.500" r="38" fill="#a8abb0" stroke="#9c9fa4" stroke-width="1.500" />
          <g fill="#6b6e73">
            <path d="M1370 184H1376L1373 188.500ZM1370 249H1376L1373 244.500ZM1340 213.500V219.500L1344.500 216.500ZM1405 213.500V219.500L1400.500 216.500Z" />
            <path d="M1352 191V196L1347.500 195ZM1393 191V196L1398 195ZM1347.500 237.500 1353 236.500 1352 241.500ZM1398 237.500 1392.500 236.500 1394 241.500Z" />
          </g>

          <g class="axis">
            <path d="M140 808 187 790" stroke="#9c4747" stroke-width="2.200" /><path d="M184 785.500 193.500 787.500 187 794Z" fill="#5b2525" /><ellipse cx="184.500" cy="790" rx="3.600" ry="4.500" fill="#ef6f6a" /><circle cx="185.500" cy="790.500" r="1.500" fill="#a63f3f" />
            <path d="M140 809 100 798" stroke="#00b254" stroke-width="2.500" /><path d="M92 795.500 101 793.500V802Z" fill="#009647" /><circle cx="100.500" cy="797.700" r="4" fill="#006b33" />
            <path d="M139.500 809 135.500 752" stroke="#0b7cff" stroke-width="2.800" /><path d="M141 808 138 756" stroke="#183f80" stroke-width="1" /><path d="M134.500 743 140 754Q135 757 130 755Z" fill="#0c6ff0" />
            <text x="199.500" y="790" fill="#e2706c">X</text><text x="86" y="799.500" fill="#12b35b">Y</text><text x="133.500" y="740.500" fill="#1583ff">Z</text>
          </g>
        </svg>
        <div class="sheets">
          <span v-for="(d, n) in ['M2 1V9M9 1 4 5 9 9Z', 'M7 1 3 5 7 9Z', 'M3 1 7 5 3 9Z', 'M8 1V9M1 1 6 5 1 9Z']" :key="n" class="nb"><svg viewBox="0 0 10 10"><path :d="d" fill="#fff" stroke="#fff" /></svg></span>
          <span class="nb"><svg viewBox="0 0 10 10"><path d="M1.500 1.500H8.500V8.500H1.500ZM3 4H7M3 6H7" fill="none" stroke="#fff" /></svg></span>
          <b>Model</b><span class="sh l1">Layout1</span><span class="sh l2">Layout2</span><span class="sh l3">+</span>
        </div>
        <div class="cmd">
          <div class="cg"><svg width="8" height="28" viewBox="0 0 8 28"><path d="M1.500 2 5.500 6M5.500 2 1.500 6" stroke="#aaa" stroke-width="1.500" /><path d="M5 9V26" stroke="#e8e8e8" stroke-width="2" stroke-dasharray="2 2" /></svg></div>
          <div class="lines">
            <div class="hist"><span>Cancel</span><div class="scroll"><svg width="15" height="26" viewBox="0 0 15 26"><path d="M4.500 10 8 6 11.500 10M4.500 17.500 8 21.500 11.500 17.500" fill="none" stroke="#4b4b4b" stroke-width="1.600" /></svg></div></div>
            <div class="prompt"><span class="colon">:</span><em>Enter command</em></div>
          </div>
        </div>
      </div>

      <aside class="side right">
        <div class="dots"><i /></div>
        <div v-for="k in rail" :key="k" class="sb"><svg viewBox="0 0 24 24" v-html="ic[k]" /></div>
      </aside>
    </main>

    <footer class="status">
      <span class="ready">Ready</span>
      <span class="xy">42495.87, 36773.75, 0</span>
      <span v-for="s in status" :key="s[0]" class="st" :class="s[2]" :style="{ width: s[1] + 'px' }"><span>{{ s[0] }}</span></span>
      <span class="st more"><i class="drop" /></span>
      <svg class="size" width="10" height="10" viewBox="0 0 10 10"><path d="M8 1H10M5 4H7M8 4H10M2 7H4M5 7H7M8 7H10" stroke="#aaa" stroke-width="1.800" /></svg>
    </footer>
  </div>
</template>

<style>
html, body { margin: 0; overflow: hidden; background: #18191d; }
</style>

<style scoped>
.app { position: relative; width: 1471px; height: 987px; display: flex; flex-direction: column; background: #2d3035; color: #f2f2f2; font: 11px/15px "Open Sans", "Noto Sans", sans-serif; overflow: hidden; white-space: nowrap; border-right: 2px solid #98999b; box-sizing: border-box; }
.app * { box-sizing: border-box; }
svg { display: block; flex: none; }
.quick { height: 28px; display: flex; align-items: center; padding-bottom: 2px; }
.grip { width: 2px; height: 17px; margin: 0 9px 0 5px; background: repeating-linear-gradient(#d0d0d0 0 2px, #222 2px 4px); }
.qb { width: 23px; height: 21px; display: flex; align-items: center; justify-content: center; }
.qb svg { width: 17px; height: 17px; }
.qb.lit { background: #3b4654; border: 1px solid #1c5480; }
.sep { width: 2px; height: 18px; margin: 0 3px; background: #6a6c70; }
.layer { width: 299px; height: 22px; margin: 0 4px 0 3px; background: #45474b; border: 1px solid #595b5f; display: flex; align-items: center; font-size: 12px; }
.layer span { padding-top: 1px; }
.chev { margin: 2px 2px 0 auto; }
.tabs { height: 28px; background: #17181c; display: flex; padding-left: 7px; box-shadow: inset 7px 0 #2d3035; }
.tab { height: 28px; line-height: 29px; font-size: 13px; text-align: center; }
.tab.on { background: #2d3035; padding-left: 3px; }
.w72 { width: 72px; } .w75 { width: 75px; } .w76 { width: 76px; } .w77 { width: 77px; } .w80 { width: 80px; padding-right: 2px; } .w82 { width: 82px; } .w84 { width: 84px; } .w88 { width: 88px; } .w102 { width: 102px; }
.ribbon { height: 93px; display: flex; flex: none; }
.handle { width: 7px; padding: 25px 0 0 3px; }
.handle i { display: block; width: 2px; height: 17px; background: repeating-linear-gradient(#d0d0d0 0 2px, #222 2px 4px); }
.group { display: flex; flex-direction: column; border-right: 2px solid #25282c; }
.create { width: 534px; } .modify { width: 292px; } .impexp { width: 127px; } .util { width: 308px; border: 0; }
.tools { height: 69px; display: flex; }
.title { height: 24px; line-height: 24px; text-align: center; font-weight: 700; }
.big { display: flex; flex-direction: column; align-items: center; padding-top: 6px; height: 69px; }
.big span { height: 15px; display: block; flex: none; }
.c43 { width: 43px; } .c50 { width: 50px; } .c51 { width: 51px; } .c52 { width: 52px; } .c54 { width: 54px; } .c55 { width: 55px; } .c58 { width: 58px; } .c94 { width: 94px; }
.col { padding: 4px 0 0 7px; }
.col.two { padding-top: 3px; }
.col.near { padding-left: 1px; }
.col.ua { width: 135px; }
.row { height: 22px; display: flex; align-items: center; }
.row svg { margin: 1px 2px 0 0; font: 700 6.200px "Liberation Sans", sans-serif; letter-spacing: -.1px; fill: #eee; overflow: visible; }
.drop { width: 0; height: 0; border: 3.500px solid transparent; border-top: 4px solid #fff; border-bottom: 0; margin: 1px 0 0 2px; }
.body { flex: 1; display: flex; min-height: 0; }
.side { display: flex; flex-direction: column; background: #18191d; }
.left { width: 44px; }
.right { width: 46px; }
.dots { height: 8px; background: #2d3035; display: flex; justify-content: center; align-items: center; }
.dots i { width: 17px; height: 2px; background: repeating-linear-gradient(90deg, #e0e0e0 0 2px, #222 2px 4px); }
.sb { height: 50px; display: flex; justify-content: center; align-items: center; }
.sb svg { width: 24px; height: 24px; fill: none; stroke: #b8b8b8; stroke-width: 1.100; overflow: visible; }
.center { width: 1379px; padding-left: 1px; background: #2d3035; display: flex; flex-direction: column; }
.docs { height: 17px; display: flex; font: 11px/16px "Liberation Sans", Arial, sans-serif; }
.doc { background: #18191d; display: flex; align-items: center; }
.doc span { padding-bottom: 2px; }
.doc svg { width: 10px; height: 10px; fill: none; stroke: #b7bcc2; stroke-width: 1.800; }
.doc.a { width: 93px; padding-left: 15px; margin: 0 3px 0 0; }
.doc.a span { width: 63px; letter-spacing: -.2px; }
.doc.b { width: 149px; background: #2d3035; padding-left: 10px; font-weight: 700; }
.doc.b span { width: 121px; letter-spacing: .5px; }
.doc.c { width: 25px; justify-content: center; margin-left: 1px; }
.doc.c svg { stroke: #fff; stroke-width: 1.100; }
.axis text { font: 300 16px "Open Sans", sans-serif; text-anchor: middle; }
.sheets { height: 18px; border-bottom: 1px solid #64676b; display: flex; align-items: flex-start; font: 11px/18px "DejaVu Sans Condensed", "DejaVu Sans", sans-serif; font-stretch: condensed; }
.nb { width: 15px; height: 15px; margin-right: 2px; background: #18191d; border: 1px solid #85888c; border-right: 0; border-bottom: 0; display: flex; align-items: center; justify-content: center; }
.nb svg { width: 10px; height: 10px; }
.sheets b { width: 41px; padding-left: 3px; letter-spacing: -.05px; }
.sh { background: #18191d; height: 16px; margin-right: 1px; text-align: center; }
.l1 { width: 51px; padding-right: 3px; } .l2 { width: 50px; padding-right: 2px; } .l3 { width: 15px; padding-right: 2px; }
.cmd { height: 47px; display: flex; padding-top: 2px; }
.cg { width: 8px; padding-top: 4px; }
.lines { flex: 1; font: 11.630px/26px "DejaVu Sans Mono", monospace; }
.hist { height: 26px; background: #838383; display: flex; justify-content: space-between; padding-left: 5px; color: #fff; }
.scroll { width: 16px; background: #f0f0f0; }
.prompt { height: 20px; line-height: 18px; background: #313538; color: #a9abac; display: flex; }
.colon { width: 15px; padding-left: 1px; color: #fff; }
.status { height: 18px; background: #18191d; display: flex; align-items: stretch; font: 11px/18px "DejaVu Sans Condensed", "DejaVu Sans", sans-serif; font-stretch: condensed; padding-top: 3px; flex: none; }
.ready { width: 537px; padding-left: 1px; line-height: 17px; }
.xy { width: 182px; border-left: 1px solid #e0e0e0; text-align: right; padding-right: 5px; line-height: 17px; letter-spacing: -.05px; }
.st { border-left: 1px solid #e0e0e0; display: flex; justify-content: center; align-items: center; line-height: 14px; letter-spacing: -.2px; flex: none; padding: 2px 1px 0 0; }
.dim { color: #65686c; }
.hot span { background: #46494d; padding: 0 1px; }
.more { width: 15px; padding-top: 5px; }
.size { margin: 5px 1px 0 auto; }
</style>
